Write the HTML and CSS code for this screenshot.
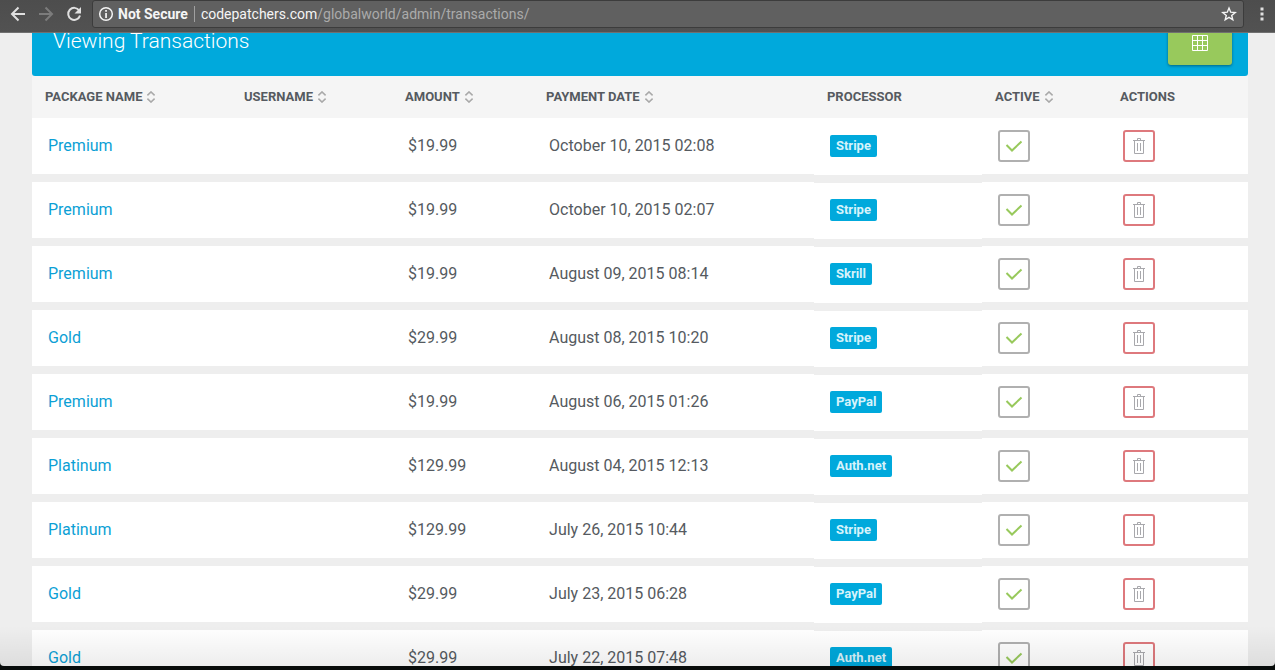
FILE: index.html
```html
<!DOCTYPE html>
<html lang="en">
<head>
<meta charset="utf-8">
<title>Viewing Transactions</title>
<link rel="stylesheet" href="styles.css">
</head>
<body>
<svg class="sprite" aria-hidden="true">
  <symbol id="sort" viewBox="0 0 10 12"><path d="M1.400 4.400 5 .9l3.600 3.500M1.400 7.600 5 11.100l3.600-3.500" fill="none" stroke="currentColor" stroke-width="1.500"/></symbol>
  <symbol id="check" viewBox="0 0 18 14"><path d="m1.500 6 5.500 5.500 9.500-9" fill="none" stroke="currentColor" stroke-width="2"/></symbol>
  <symbol id="trash" viewBox="0 0 12 16"><path d="M0 2.500h12M4.500 2.500v-2h3v2M1.500 2.500v13h9v-13M4.500 5v8M7.500 5v8" fill="none" stroke="currentColor"/></symbol>
</svg>
<header class="toolbar">
  <nav class="nav">
    <button class="nav-btn" type="button" aria-label="Back"><svg width="16" height="16" viewBox="0 0 16 16"><path d="M15 8H2M8.500 1.500 2 8l6.500 6.500" fill="none" stroke="currentColor" stroke-width="2"/></svg></button>
    <button class="nav-btn dim" type="button" aria-label="Forward"><svg width="16" height="16" viewBox="0 0 16 16"><path d="M1 8h13M7.500 1.500 14 8l-6.500 6.500" fill="none" stroke="currentColor" stroke-width="2"/></svg></button>
    <button class="nav-btn" type="button" aria-label="Reload"><svg width="16" height="16" viewBox="0 0 16 16"><path d="M13.200 4.500A6 6 0 1 0 14 9.500" fill="none" stroke="currentColor" stroke-width="2"/><path d="M15 1v6.500H8.500z" fill="currentColor"/></svg></button>
  </nav>
  <div class="address">
    <svg width="16" height="16" viewBox="0 0 16 16"><circle cx="8" cy="8" r="6.300" fill="none" stroke="currentColor" stroke-width="1.500"/><path d="M7.200 7h1.700v5H7.200zM7.200 4h1.700v1.700H7.200z" fill="currentColor"/></svg>
    <span class="security">Not Secure</span>
    <span class="url"><span class="host">codepatchers.com</span>/globalworld/admin/transactions/</span>
    <button class="nav-btn" type="button" aria-label="Bookmark"><svg width="16" height="16" viewBox="0 0 16 16"><path d="m8 2 1.700 4.200 4.500.3-3.500 2.900 1.100 4.400L8 11.400l-3.800 2.400 1.100-4.400-3.500-2.900 4.500-.3z" fill="none" stroke="currentColor" stroke-width="1.400"/></svg></button>
  </div>
  <button class="nav-btn menu" type="button" aria-label="Menu"><svg width="4" height="16" viewBox="0 0 4 16"><path d="M.5 1.500h3v3h-3zM.5 6.500h3v3h-3zM.5 11.500h3v3h-3z" fill="currentColor"/></svg></button>
</header>
<main class="page">
  <section class="panel">
    <div class="panel-head">
      <h1>Viewing Transactions</h1>
      <button class="grid-btn" type="button" aria-label="Table view"><svg width="16" height="16" viewBox="0 0 16 16"><path d="M.5.5h15v15H.5zM5.500 0v16M10.500 0v16M0 5.500h16M0 10.500h16" fill="none" stroke="currentColor"/></svg></button>
    </div>
    <table>
      <colgroup><col class="c-package"><col class="c-user"><col class="c-amount"><col class="c-date"><col class="c-processor"><col class="c-active"><col class="c-actions"></colgroup>
      <thead>
        <tr>
          <th><button type="button" class="sort">PACKAGE NAME<svg><use href="#sort"/></svg></button></th>
          <th><button type="button" class="sort">USERNAME<svg><use href="#sort"/></svg></button></th>
          <th><button type="button" class="sort">AMOUNT<svg><use href="#sort"/></svg></button></th>
          <th><button type="button" class="sort">PAYMENT DATE<svg><use href="#sort"/></svg></button></th>
          <th>PROCESSOR</th>
          <th><button type="button" class="sort">ACTIVE<svg><use href="#sort"/></svg></button></th>
          <th>ACTIONS</th>
        </tr>
      </thead>
      <tbody>
        <tr><td><a href="#">Premium</a></td><td></td><td>$19.99</td><td>October 10, 2015 02:08</td><td class="processor"><span class="badge">Stripe</span></td><td><button type="button" class="box active" aria-label="Active"><svg><use href="#check"/></svg></button></td><td><button type="button" class="box delete" aria-label="Delete"><svg><use href="#trash"/></svg></button></td></tr>
        <tr><td><a href="#">Premium</a></td><td></td><td>$19.99</td><td>October 10, 2015 02:07</td><td class="processor"><span class="badge">Stripe</span></td><td><button type="button" class="box active" aria-label="Active"><svg><use href="#check"/></svg></button></td><td><button type="button" class="box delete" aria-label="Delete"><svg><use href="#trash"/></svg></button></td></tr>
        <tr><td><a href="#">Premium</a></td><td></td><td>$19.99</td><td>August 09, 2015 08:14</td><td class="processor"><span class="badge">Skrill</span></td><td><button type="button" class="box active" aria-label="Active"><svg><use href="#check"/></svg></button></td><td><button type="button" class="box delete" aria-label="Delete"><svg><use href="#trash"/></svg></button></td></tr>
        <tr><td><a href="#">Gold</a></td><td></td><td>$29.99</td><td>August 08, 2015 10:20</td><td class="processor"><span class="badge">Stripe</span></td><td><button type="button" class="box active" aria-label="Active"><svg><use href="#check"/></svg></button></td><td><button type="button" class="box delete" aria-label="Delete"><svg><use href="#trash"/></svg></button></td></tr>
        <tr><td><a href="#">Premium</a></td><td></td><td>$19.99</td><td>August 06, 2015 01:26</td><td class="processor"><span class="badge">PayPal</span></td><td><button type="button" class="box active" aria-label="Active"><svg><use href="#check"/></svg></button></td><td><button type="button" class="box delete" aria-label="Delete"><svg><use href="#trash"/></svg></button></td></tr>
        <tr><td><a href="#">Platinum</a></td><td></td><td>$129.99</td><td>August 04, 2015 12:13</td><td class="processor"><span class="badge">Auth.net</span></td><td><button type="button" class="box active" aria-label="Active"><svg><use href="#check"/></svg></button></td><td><button type="button" class="box delete" aria-label="Delete"><svg><use href="#trash"/></svg></button></td></tr>
        <tr><td><a href="#">Platinum</a></td><td></td><td>$129.99</td><td>July 26, 2015 10:44</td><td class="processor"><span class="badge">Stripe</span></td><td><button type="button" class="box active" aria-label="Active"><svg><use href="#check"/></svg></button></td><td><button type="button" class="box delete" aria-label="Delete"><svg><use href="#trash"/></svg></button></td></tr>
        <tr><td><a href="#">Gold</a></td><td></td><td>$29.99</td><td>July 23, 2015 06:28</td><td class="processor"><span class="badge">PayPal</span></td><td><button type="button" class="box active" aria-label="Active"><svg><use href="#check"/></svg></button></td><td><button type="button" class="box delete" aria-label="Delete"><svg><use href="#trash"/></svg></button></td></tr>
        <tr><td><a href="#">Gold</a></td><td></td><td>$29.99</td><td>July 22, 2015 07:48</td><td class="processor"><span class="badge">Auth.net</span></td><td><button type="button" class="box active" aria-label="Active"><svg><use href="#check"/></svg></button></td><td><button type="button" class="box delete" aria-label="Delete"><svg><use href="#trash"/></svg></button></td></tr>
      </tbody>
    </table>
  </section>
</main>
</body>
</html>
```

FILE: styles.css
```css
* { box-sizing: border-box; }
body {
  margin: 0;
  height: 100vh;
  display: flex;
  flex-direction: column;
  padding-bottom: 4px;
  overflow: hidden;
  background: #080c0b;
  color: #555a60;
  font: 16px/24px Roboto, sans-serif;
}
button {
  margin: 0;
  padding: 0;
  border: 0;
  background: none;
  color: inherit;
  font: inherit;
}
svg { display: block; flex: none; }
.sprite { position: absolute; width: 0; height: 0; }

.toolbar {
  flex: none;
  display: flex;
  align-items: flex-start;
  padding: 0 11px 4px 10px;
  background: linear-gradient(#4d4d4d, #525252);
  border-bottom: 1px solid #707070;
  color: #e0e0e0;
}
.nav { display: flex; gap: 12px; margin-right: 10px; }
.nav-btn { height: 28px; display: flex; align-items: center; }
.dim { color: #7c7c7c; }
.menu { margin-left: 16px; }
.address {
  flex: 1;
  display: flex;
  align-items: center;
  height: 28px;
  padding: 0 6px 0 5px;
  border: 1px solid #3c3c3c;
  border-radius: 3px;
  background: #606060;
  font-size: 14px;
  line-height: 20px;
  color: #f5f5f5;
}
.security { margin-left: 4px; padding-right: 6px; font-weight: 700; }
.url {
  flex: 1;
  padding-left: 6px;
  border-left: 1px solid #a0a0a0;
  line-height: 16px;
  color: #ababab;
}
.host { color: #f5f5f5; }

.page {
  position: relative;
  flex: 1;
  min-height: 0;
  overflow: hidden;
  padding: 0 27px 0 32px;
  background: #eee;
  border-radius: 0 0 4px 4px;
}
.page::after {
  content: "";
  position: absolute;
  inset: auto 0 0;
  height: 40px;
  background: linear-gradient(transparent, rgba(0, 0, 0, .07));
  pointer-events: none;
}
.panel { margin-top: -24px; }
.panel-head {
  display: flex;
  align-items: center;
  justify-content: space-between;
  padding: 12px 16px 11px 21px;
  border-radius: 3px;
  background: #00a9dc;
  color: #fff;
}
h1 { margin: 0 0 4px; font-size: 21px; line-height: 28px; font-weight: 300; }
.grid-btn {
  width: 64px;
  height: 44px;
  display: grid;
  place-items: center;
  border-radius: 3px;
  background: #98c95c;
  box-shadow: 0 1px 3px rgba(0, 0, 0, .4);
}

table { width: 100%; table-layout: fixed; border-spacing: 0; }
.c-package { width: 16.37%; }
.c-user { width: 13.24%; }
.c-amount { width: 11.6%; }
.c-date { width: 23.1%; }
.c-processor { width: 13.82%; }
.c-active { width: 10.28%; }
.c-actions { width: 11.59%; }
th {
  height: 42px;
  padding: 0 13px;
  background: #f5f5f5;
  font-size: 13px;
  line-height: 20px;
  font-weight: 700;
  text-align: left;
  white-space: nowrap;
}
.sort { display: flex; align-items: center; gap: 4px; }
.sort svg { width: 10px; height: 12px; color: #a9a9a9; }
td {
  height: 64px;
  padding: 0 16px;
  border-bottom: 8px solid #eee;
  background: #fff;
  white-space: nowrap;
}
td.processor { padding-bottom: 1px; border-bottom-width: 7px; background: linear-gradient(#eee 1px, #fff 1px); }
tr:first-child td.processor { background: #fff; }
a { color: #0c9fd5; text-decoration: none; }
.badge {
  display: block;
  width: fit-content;
  padding: 0 6px;
  border-radius: 2px;
  background: #00a9dc;
  color: #d6f3fb;
  font-size: 13px;
  line-height: 22px;
  font-weight: 700;
}
.box {
  width: 32px;
  height: 32px;
  display: grid;
  place-items: center;
  border: 2px solid #b0b0b0;
  border-radius: 3px;
}
.active svg { width: 18px; height: 14px; color: #98c95c; }
.delete { border-color: #de797d; }
.delete svg { width: 12px; height: 16px; color: #a8a8ac; }
```
